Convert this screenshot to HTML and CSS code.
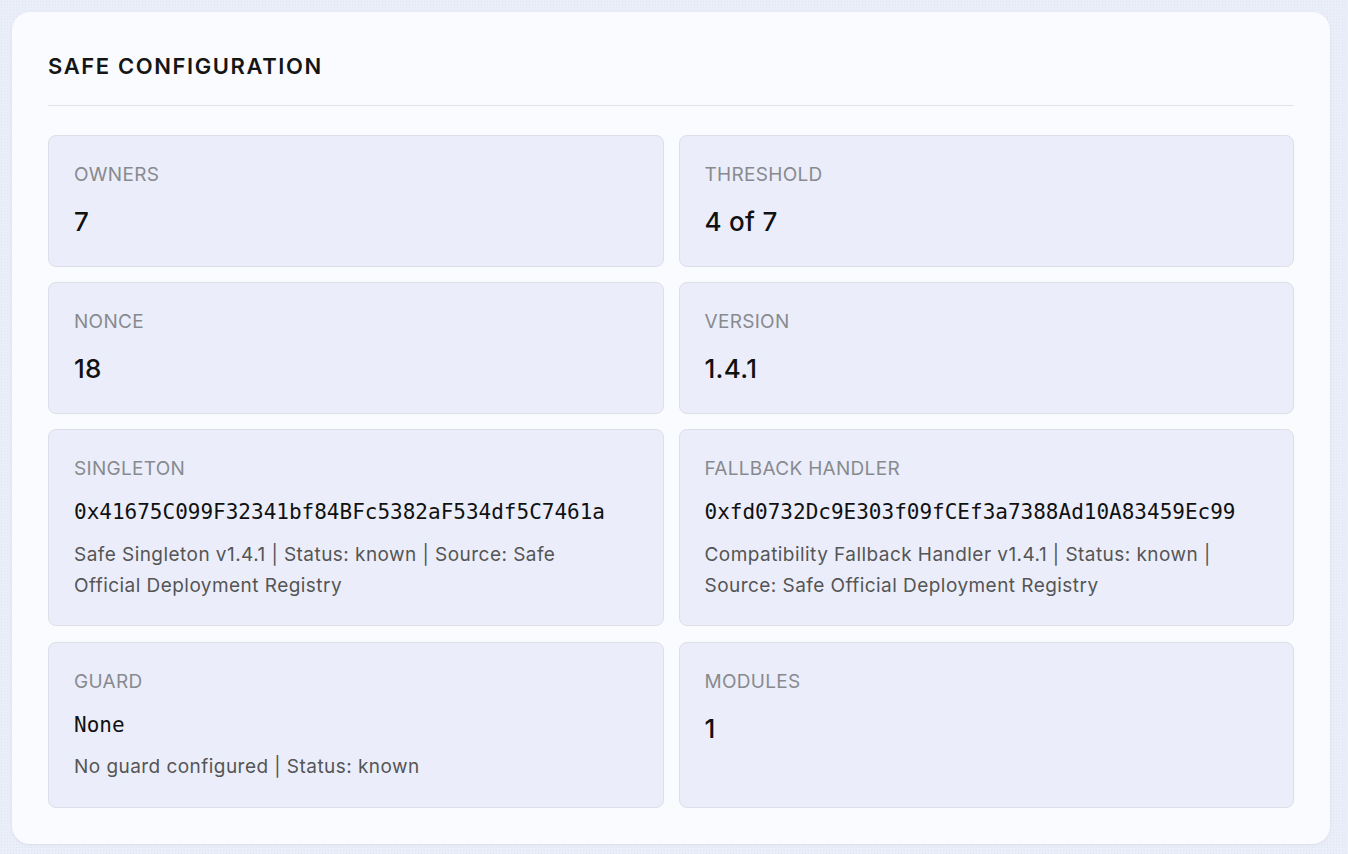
FILE: index.html
```html
<!DOCTYPE html>
<html lang="en">
<head>
  <meta charset="UTF-8" />
  <meta name="viewport" content="width=device-width, initial-scale=1.0" />
  <title>Safe Configuration</title>
  <link rel="stylesheet" href="styles.css">
</head>
<body>
  <div class="page">
    <section class="card">
      <h2 class="card-title">SAFE CONFIGURATION</h2>
      <div class="config-grid">
        <div class="cell">
          <div class="label">Owners</div>
          <div class="value">7</div>
        </div>
        <div class="cell">
          <div class="label">Threshold</div>
          <div class="value">4 of 7</div>
        </div>
        <div class="cell">
          <div class="label">Nonce</div>
          <div class="value">18</div>
        </div>
        <div class="cell">
          <div class="label">Version</div>
          <div class="value">1.4.1</div>
        </div>
        <div class="cell">
          <div class="label">Singleton</div>
          <div class="mono">0x41675C099F32341bf84BFc5382aF534df5C7461a</div>
          <div class="desc">Safe Singleton v1.4.1 | Status: known | Source: Safe Official Deployment Registry</div>
        </div>
        <div class="cell">
          <div class="label">Fallback Handler</div>
          <div class="mono">0xfd0732Dc9E303f09fCEf3a7388Ad10A83459Ec99</div>
          <div class="desc">Compatibility Fallback Handler v1.4.1 | Status: known | Source: Safe Official Deployment Registry</div>
        </div>
        <div class="cell">
          <div class="label">Guard</div>
          <div class="mono">None</div>
          <div class="desc">No guard configured | Status: known</div>
        </div>
        <div class="cell">
          <div class="label">Modules</div>
          <div class="value">1</div>
        </div>
      </div>
    </section>
  </div>
</body>
</html>
```

FILE: styles.css
```css
html, body { margin: 0; padding: 0; }
body {
  font-family: Inter, "Noto Sans", sans-serif;
  background: #eaeef9;
  background-image: radial-gradient(#dfe4f5 0.7px, transparent 0.8px);
  background-size: 3px 3px;
  color: #111;
}
.page { padding: 12px 18px 10px 12px; }
.card {
  background: #fafbfe;
  border-radius: 18px;
  padding: 39px 36px 36px;
  box-shadow: 0 1px 3px rgba(120, 130, 170, 0.12);
}
.card-title {
  margin: 0;
  font-size: 22px;
  line-height: 30px;
  font-weight: 600;
  letter-spacing: 1.6px;
  color: #151515;
  padding-bottom: 24px;
  border-bottom: 1px solid #e1e3e9;
}
.config-grid {
  margin-top: 29px;
  display: grid;
  grid-template-columns: 1fr 1fr;
  gap: 15.5px 15px;
}
.cell {
  background: #ebeefa;
  border: 1px solid #dcdfe7;
  border-radius: 8px;
  padding: 27px 40px 24.5px 25px;
}
.label {
  font-size: 19px;
  line-height: 24px;
  color: #888a8f;
  text-transform: uppercase;
  letter-spacing: 0.3px;
}
.value {
  margin-top: 15px;
  font-size: 26px;
  line-height: 39px;
  font-weight: 500;
  letter-spacing: 0.3px;
  color: #111;
}
.mono {
  margin-top: 15px;
  font-family: "DejaVu Sans Mono", "Liberation Mono", monospace;
  font-size: 21px;
  line-height: 32px;
  color: #111;
}
.desc {
  margin-top: 10.5px;
  font-size: 19px;
  line-height: 31px;
  letter-spacing: 0.45px;
  color: #555;
}
```
